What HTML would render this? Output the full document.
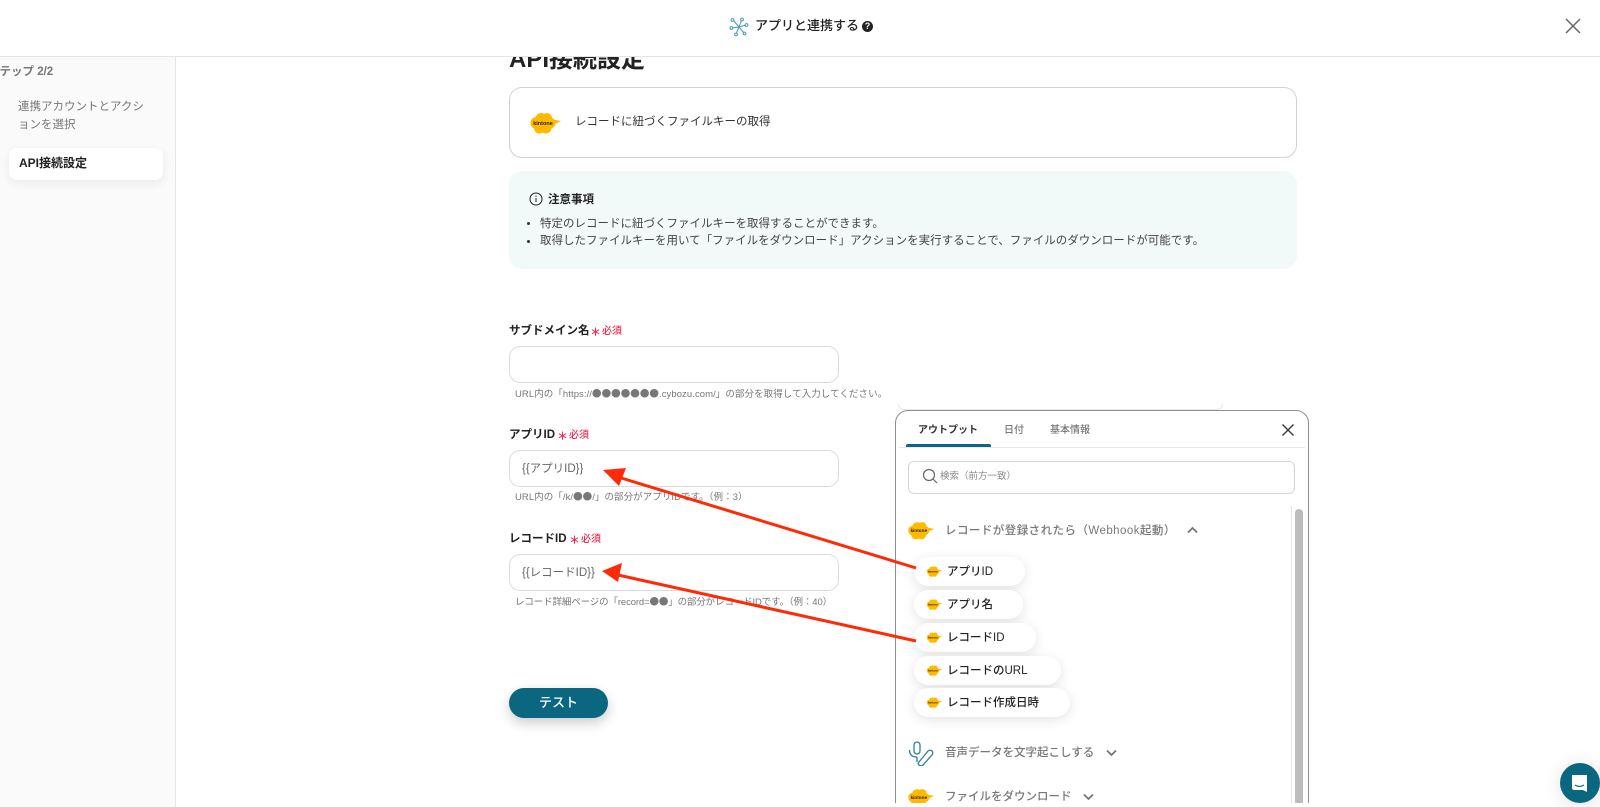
<!DOCTYPE html>
<html lang="ja">
<head>
<meta charset="utf-8">
<style>
*{box-sizing:border-box;margin:0;padding:0}
html,body{width:1600px;height:807px;overflow:hidden;background:#fff}
body{position:relative;font-family:"Liberation Sans","Noto Sans CJK JP",sans-serif;color:#222;filter:blur(.3px)}
.a{position:absolute;white-space:nowrap}
.t{position:absolute;white-space:nowrap;line-height:18px;height:18px}
.input{position:absolute;left:509px;width:330px;height:37px;border:1px solid #d8dbe4;border-radius:11px;background:#fff;font-size:11.500px;color:#666;line-height:37px;padding-left:12px}
.label{font-size:11.500px;font-weight:700;color:#222}
.req{color:#f5294f;font-size:10px;font-weight:500}
.star{color:#f5294f;font-size:11px;font-weight:700}
.hint{font-size:9.500px;color:#777}
.hint b{font-family:"Noto Sans CJK JP",sans-serif;font-weight:400;color:#777;font-size:9.500px}
.pill{position:absolute;left:914px;height:29px;border-radius:15px;background:#fff;box-shadow:0 3px 12px rgba(0,0,0,.11);font-size:11.500px;font-weight:500;color:#222;line-height:31px;padding-left:33px}
.pill svg{position:absolute;left:12px;top:8px}
.sec{font-size:11.500px;font-weight:500;color:#777}
</style>
</head>
<body>
<svg width="0" height="0" style="position:absolute">
<defs>
<symbol id="cl" viewBox="0 0 32 24">
<g fill="#ffb900"><circle cx="7.500" cy="12" r="6"/><circle cx="12" cy="7.500" r="5.500"/><circle cx="18" cy="7" r="5"/><circle cx="21" cy="12" r="5.500"/><circle cx="17" cy="17" r="5.500"/><circle cx="10.500" cy="17" r="5.500"/><path d="M22 8L32 10L24 14Z"/></g>
<text x="14" y="14" font-size="5.500" font-weight="700" text-anchor="middle" fill="#2a2000" font-family="Liberation Sans,sans-serif">kintone</text>
</symbol>
</defs>
</svg>

<!-- sidebar -->
<div class="a" style="left:0;top:56px;width:176px;height:751px;background:#fafafa;border-right:1px solid #e6e6e6"></div>
<div class="t" style="left:-12px;top:63px;font-size:11.500px;font-weight:700;color:#777">ステップ 2/2</div>
<div class="t" style="left:18px;top:98px;font-size:11.500px;color:#777">連携アカウントとアクシ</div>
<div class="t" style="left:18px;top:116px;font-size:11.500px;color:#777">ョンを選択</div>
<div class="a" style="left:9px;top:148px;width:154px;height:32px;background:#fff;border-radius:8px;box-shadow:0 3px 10px rgba(0,0,0,.07)"></div>
<div class="t" style="left:19px;top:154px;font-size:12px;font-weight:700;color:#222">API接続設定</div>

<!-- title -->
<div class="t" style="left:509px;top:46px;height:28px;line-height:28px;font-size:24px;font-weight:700;color:#222">API接続設定</div>

<!-- header -->
<div class="a" style="left:0;top:0;width:1600px;height:57px;background:#fff;border-bottom:1px solid #e4e4e4"></div>
<svg class="a" style="left:729px;top:17px" width="20" height="20" viewBox="0 0 20 20" fill="none" stroke="#4a9ab2" stroke-width="1">
<path d="M10 10L4 3M10 10L13 2.500M10 10L3 11M10 10L17 8M10 10L7 17M10 10L15 16"/>
<circle cx="3.500" cy="3" r="1.400" fill="#fff"/><circle cx="13" cy="2.500" r="1.400" fill="#fff"/><circle cx="2.500" cy="11" r="1.400" fill="#fff"/><circle cx="17.500" cy="8" r="1.400" fill="#fff"/><circle cx="7" cy="17.500" r="1.400" fill="#fff"/><circle cx="15.500" cy="16.500" r="1.400" fill="#fff"/>
</svg>
<div class="t" style="left:755px;top:17px;font-size:13px;font-weight:500;color:#222">アプリと連携する</div>
<div class="a" style="left:862px;top:21px;width:11px;height:11px;border-radius:50%;background:#222;color:#fff;font-size:9px;font-weight:700;line-height:11px;text-align:center">?</div>
<svg class="a" style="left:1565px;top:18px" width="16" height="16" viewBox="0 0 16 16" stroke="#666" stroke-width="1.500"><path d="M1 1L15 15M15 1L1 15"/></svg>

<!-- card -->
<div class="a" style="left:509px;top:87px;width:788px;height:71px;border:1px solid #d2d2d2;border-radius:13px;background:#fff"></div>
<svg class="a" style="left:529px;top:111px" width="32" height="24"><use href="#cl"/></svg>
<div class="t" style="left:575px;top:113px;font-size:11.500px;color:#333">レコードに紐づくファイルキーの取得</div>

<!-- note -->
<div class="a" style="left:509px;top:171px;width:788px;height:98px;background:#f2faf9;border-radius:13px"></div>
<svg class="a" style="left:529px;top:192px" width="14" height="14" viewBox="0 0 14 14" fill="none" stroke="#222"><circle cx="7" cy="7" r="6"/><path d="M7 6v4M7 3.500v1.200"/></svg>
<div class="t" style="left:548px;top:191px;font-size:11.500px;font-weight:700;color:#222">注意事項</div>
<div class="a" style="left:527px;top:222px;width:3px;height:3px;border-radius:50%;background:#333"></div>
<div class="a" style="left:527px;top:240px;width:3px;height:3px;border-radius:50%;background:#333"></div>
<div class="t" style="left:540px;top:215px;font-size:11.500px;color:#444">特定のレコードに紐づくファイルキーを取得することができます。</div>
<div class="t" style="left:540px;top:232px;font-size:11.500px;color:#444">取得したファイルキーを用いて「ファイルをダウンロード」アクションを実行することで、ファイルのダウンロードが可能です。</div>

<!-- form -->
<div class="t label" style="left:509px;top:322px">サブドメイン名</div>
<div class="t star" style="left:590px;top:324px">＊</div>
<div class="t req" style="left:602px;top:323px">必須</div>
<div class="input" style="top:346px"></div>
<div class="t hint" style="left:515px;top:384px;letter-spacing:.07px">URL内の「https://<b>●●●●●●●</b>.cybozu.com/」の部分を取得して入力してください。</div>

<div class="t label" style="left:509px;top:426px">アプリID</div>
<div class="t star" style="left:557px;top:428px">＊</div>
<div class="t req" style="left:569px;top:427px">必須</div>
<div class="input" style="top:450px">{{アプリID}}</div>
<div class="t hint" style="left:515px;top:487px;letter-spacing:.06px">URL内の「/k/<b>●●</b>/」の部分がアプリIDです。（例：3）</div>

<div class="t label" style="left:509px;top:530px">レコードID</div>
<div class="t star" style="left:569px;top:532px">＊</div>
<div class="t req" style="left:581px;top:531px">必須</div>
<div class="input" style="top:554px">{{レコードID}}</div>
<div class="t hint" style="left:515px;top:592px;letter-spacing:-.13px">レコード詳細ページの「record=<b>●●</b>」の部分がレコードIDです。（例：40）</div>

<div class="a" style="left:509px;top:688px;width:99px;height:30px;border-radius:15px;background:#0b6780;color:#fff;font-size:13px;font-weight:500;line-height:30px;text-align:center;box-shadow:0 5px 12px rgba(0,0,0,.2)">テスト</div>

<!-- popup -->
<div class="a" style="left:898px;top:404px;width:325px;height:6px;border:1px solid #e8e8e8;border-top:0;border-radius:0 0 6px 6px"></div>
<div class="a" style="left:895px;top:410px;width:414px;height:420px;border:1px solid #8f8f8f;border-radius:13px;background:#fff"></div>
<div class="t" style="left:918px;top:422px;font-size:10px;font-weight:700;color:#333">アウトプット</div>
<div class="t" style="left:1004px;top:422px;font-size:10px;font-weight:500;color:#777">日付</div>
<div class="t" style="left:1050px;top:422px;font-size:10px;font-weight:500;color:#777">基本情報</div>
<div class="a" style="left:906px;top:444px;width:85px;height:3px;background:#0b6780;border-radius:2px 2px 0 0"></div>
<div class="a" style="left:899px;top:447px;width:406px;height:1px;background:#e8e8e8"></div>
<svg class="a" style="left:1281px;top:423px" width="14" height="14" viewBox="0 0 14 14" stroke="#333" stroke-width="1.300"><path d="M1.500 1.500L12.500 12.500M12.500 1.500L1.500 12.500"/></svg>
<div class="a" style="left:908px;top:461px;width:387px;height:33px;border:1px solid #d6d6d6;border-radius:6px"></div>
<svg class="a" style="left:922px;top:468px" width="16" height="16" viewBox="0 0 16 16" fill="none" stroke="#666" stroke-width="1.200"><circle cx="7" cy="7" r="5.500"/><path d="M11 11L15 15"/></svg>
<div class="t" style="left:940px;top:468px;font-size:9.500px;color:#888">検索（前方一致）</div>

<div class="a" style="left:1291px;top:506px;width:1px;height:297px;background:#e6e6e6"></div>
<div class="a" style="left:1295px;top:509px;width:8px;height:294px;background:#bdbdbd;border-radius:4px 4px 0 0"></div>

<svg class="a" style="left:907px;top:520px" width="27" height="21"><use href="#cl"/></svg>
<div class="t sec" style="left:945px;top:522px;letter-spacing:.45px">レコードが登録されたら（Webhook起動）</div>
<svg class="a" style="left:1187px;top:526px" width="11" height="8" viewBox="0 0 11 8" fill="none" stroke="#777" stroke-width="1.800"><path d="M1 6.500L5.500 2L10 6.500"/></svg>

<div class="pill" style="top:557px;width:111px">アプリID<svg width="16" height="13"><use href="#cl"/></svg></div>
<div class="pill" style="top:590px;width:109px">アプリ名<svg width="16" height="13"><use href="#cl"/></svg></div>
<div class="pill" style="top:623px;width:122px">レコードID<svg width="16" height="13"><use href="#cl"/></svg></div>
<div class="pill" style="top:656px;width:147px">レコードのURL<svg width="16" height="13"><use href="#cl"/></svg></div>
<div class="pill" style="top:688px;width:156px">レコード作成日時<svg width="16" height="13"><use href="#cl"/></svg></div>

<svg class="a" style="left:908px;top:741px" width="26" height="25" viewBox="0 0 26 25" fill="none" stroke="#2e7f99" stroke-width="1.300">
<rect x="6" y="1" width="6" height="12" rx="3"/><path d="M1.500 9c0 5 3 7 7.500 7M9 16v5"/><path d="M11 21L20 10c1-1 3-1 4 0s1 3 0 4L15 24c-1 1-3 1-4 0s-1-2 0-3z"/>
</svg>
<div class="t sec" style="left:945px;top:744px">音声データを文字起こしする</div>
<svg class="a" style="left:1106px;top:749px" width="11" height="8" viewBox="0 0 11 8" fill="none" stroke="#777" stroke-width="1.800"><path d="M1 1.500L5.500 6L10 1.500"/></svg>

<svg class="a" style="left:907px;top:787px" width="27" height="21"><use href="#cl"/></svg>
<div class="t sec" style="left:945px;top:788px">ファイルをダウンロード</div>
<svg class="a" style="left:1083px;top:793px" width="11" height="8" viewBox="0 0 11 8" fill="none" stroke="#777" stroke-width="1.800"><path d="M1 1.500L5.500 6L10 1.500"/></svg>
<div class="a" style="left:890px;top:803px;width:425px;height:4px;background:#fff"></div>

<!-- arrows -->
<svg class="a" style="left:0;top:0" width="1600" height="807">
<g stroke="#ff2a0a" stroke-width="3"><path d="M916 568L618 477"/><path d="M916 641L618 575"/></g>
<path d="M603 470L626 468L619 486Z" fill="#ff2a0a"/>
<path d="M602 571L622 563L618 582Z" fill="#ff2a0a"/>
</svg>

<!-- chat -->
<div class="a" style="left:1560px;top:763px;width:40px;height:40px;border-radius:50%;background:#0b6780;box-shadow:0 2px 18px rgba(0,0,0,.12)"></div>
<svg class="a" style="left:1570px;top:773px" width="20" height="21" viewBox="0 0 20 21"><path d="M2 2h15v17l-4-2H4c-1 0-2-1-2-2z" fill="#fff"/><path d="M5 12c3 2 6 2 9 0" fill="none" stroke="#0b6780" stroke-width="1.200"/></svg>
</body>
</html>
